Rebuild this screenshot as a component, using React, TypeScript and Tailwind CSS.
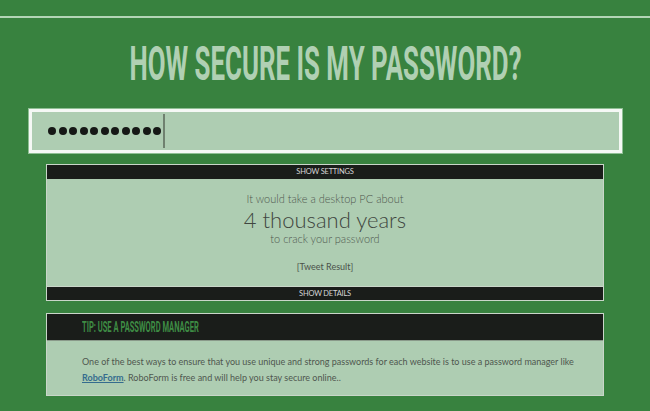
import React from "react";

export default function App() {
  const dots = Array.from({ length: 11 });
  return (
    <div className="min-h-[411px] w-full bg-[#38823f] overflow-hidden" style={{ fontFamily: "Lato, 'Liberation Sans', sans-serif" }}>
      <div className="h-[18px] border-b-2 border-[#b3d5b6]" />
      <div className="h-[91px] flex items-center justify-center">
        <h1
          className="inline-block scale-x-[0.55] scale-y-[1.03] text-[47px] leading-none font-bold text-[#b0d0b3] whitespace-nowrap"
          style={{ fontFamily: "Roboto, 'Liberation Sans', sans-serif" }}
        >
          HOW SECURE IS MY PASSWORD?
        </h1>
      </div>
      <div className="mx-[29px] w-[593px] h-[44px] border-[3px] border-[#f5f8f5] bg-[#aecdb2] flex items-center pl-[16px] shadow-[0_0_0_1px_#8fbf94]">
        <div className="flex items-center gap-[2.5px]">
          {dots.map((_, i) => (
            <div key={i} className="w-[8px] h-[8px] rounded-full bg-[#161816]" />
          ))}
        </div>
        <div className="ml-[2px] w-[2px] h-[34px] bg-[#6f816f]" />
      </div>

      <div className="mt-[11px] ml-[46px] w-[558px] border border-[#c9d6c9]">
        <div className="h-[14px] bg-[#1a1d1a] flex items-center justify-center text-[7.5px] text-[#d6d6d6] tracking-[-0.2px]">
          SHOW SETTINGS
        </div>
        <div className="h-[107px] bg-[#aecdb2] flex flex-col items-center pt-[13px] text-[#4f564f]">
          <div className="text-[11px] leading-[13px] font-light text-[#505850]">It would take a desktop PC about</div>
          <div className="text-[22px] leading-[24px] mt-[3px] font-light text-[#404640]">4 thousand years</div>
          <div className="text-[11px] leading-[13px] font-light text-[#505850]">to crack your password</div>
          <div className="text-[9px] leading-[12px] mt-[16px] font-normal text-[#4a514a]">[Tweet Result]</div>
        </div>
        <div className="h-[14px] bg-[#1a1d1a] flex items-center justify-center text-[7.5px] text-[#d6d6d6] tracking-[-0.2px] border-t border-[#c9d6c9]">
          SHOW DETAILS
        </div>
      </div>

      <div className="mt-[12px] ml-[46px] w-[558px] border border-[#c9d6c9]">
        <div className="h-[27px] bg-[#1a1d1a] flex items-center pl-[35px] border-b border-[#8a9a8a]">
          <span
            className="inline-block origin-left scale-x-[0.58] scale-y-[1.1] text-[13px] leading-none font-bold text-[#3e8c44] whitespace-nowrap"
            style={{ fontFamily: "Roboto, 'Liberation Sans', sans-serif" }}
          >
            TIP: USE A PASSWORD MANAGER
          </span>
        </div>
        <div className="h-[54px] bg-[#aecdb2] pl-[35px] pr-[20px] pt-[13px] text-[9px] leading-[16px] text-[#4f574f]">
          One of the best ways to ensure that you use unique and strong passwords for each website is to use a password manager like{" "}
          <a className="font-bold text-[#356c8e] underline">RoboForm</a>. RoboForm is free and will help you stay secure online..
        </div>
      </div>
    </div>
  );
}
